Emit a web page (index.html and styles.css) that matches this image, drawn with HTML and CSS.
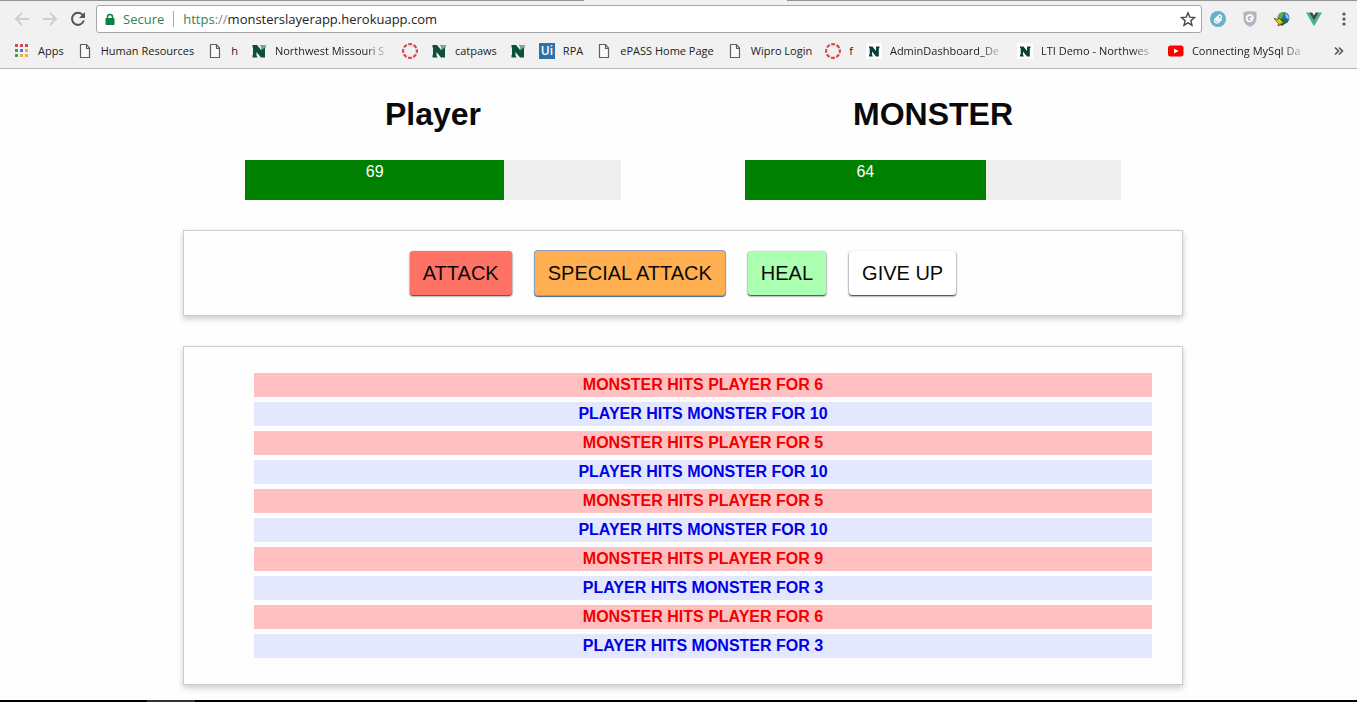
FILE: index.html
```html
<!DOCTYPE html>
<html lang="en">
<head>
<meta charset="utf-8">
<title>Monster Slayer</title>
<link rel="stylesheet" href="styles.css">
</head>
<body>
<svg class="defs" aria-hidden="true">
  <symbol id="page" viewBox="0 0 16 16"><path d="M3.500 1.500h6l3 3.500v9.500h-9zM9.500 1.500v4h3" fill="#fafafa" stroke="#5f5f5f" stroke-width="1.200"/></symbol>
  <symbol id="ring" viewBox="0 0 16 16"><circle cx="8" cy="8" r="6.900" fill="none" stroke="#d84a50" stroke-width="2.200" stroke-dasharray="3.900 1.519" stroke-dashoffset="1.950"/></symbol>
  <symbol id="north" viewBox="0 0 16 16"><path d="M1.500 2h4.500l4.500 5.500V4L9 2h5.500v2l-.5 1v9.500h-4L5.500 9v3.500l1 2h-5v-2l.5-1V5l-.5-1z" fill="#0b5038"/><path d="M9 2h5.500v2L10.500 7V4z" fill="#7fa796"/></symbol>
  <symbol id="small-n" viewBox="0 0 16 16"><path fill="#fff" d="M0 0h16v16H0z"/><path d="M3 3.500h3.500L10 8V3.500h3.500v1.300l-.7.700v8H10L6 8.500v3l.8 2H3v-1.500l.7-.7V5.500L3 4.800z" fill="#0b4038"/></symbol>
</svg>

<header class="browser">
  <div class="tab-edge"><span></span><span></span></div>
  <div class="toolbar">
    <button class="nav" aria-label="Back"><svg viewBox="0 0 16 16"><path d="M15 8H2M8 2L2 8l6 6" fill="none" stroke="#cfcfcf" stroke-width="2"/></svg></button>
    <button class="nav" aria-label="Forward"><svg viewBox="0 0 16 16"><path d="M1 8h13M8 2l6 6-6 6" fill="none" stroke="#cfcfcf" stroke-width="2"/></svg></button>
    <button class="nav" aria-label="Reload"><svg viewBox="0 0 16 16"><path d="M12.800 4.200A6 6 0 1 0 13.800 9.500" fill="none" stroke="#555" stroke-width="2"/><path d="M15 1v6H9z" fill="#555"/></svg></button>
    <div class="address">
      <svg class="lock" viewBox="0 0 10 13"><path d="M2.500 6V4a2.500 2.500 0 0 1 5 0v2" fill="none" stroke="#0b8043" stroke-width="1.500"/><rect x=".5" y="5" width="9" height="7" rx=".8" fill="#0b8043"/></svg>
      <span class="secure">Secure</span>
      <span class="url"><span class="scheme">https</span><span class="slashes">://</span>monsterslayerapp.herokuapp.com</span>
      <button class="star" aria-label="Bookmark this page"><svg viewBox="0 0 16 16"><path d="M8 1.800l1.800 4.300 4.700.4-3.600 3.100 1.100 4.600L8 11.800l-4 2.400 1.100-4.600L1.500 6.500l4.700-.4z" fill="none" stroke="#4a4a4a" stroke-width="1.400"/></svg></button>
    </div>
    <div class="extensions">
      <button aria-label="Clip extension"><svg viewBox="0 0 16 16"><circle cx="8" cy="8" r="8" fill="#65b1ca"/><path d="M11.800 8.200L8.500 11.500q-1.700 1.300-3.200-.2-1.600-1.700 0-3.400L8.800 4.600q1.300-1 2.300 0t0 2.200L8 9.700q-.8.500-1.200 0t0-1.200l2.400-2.200" fill="none" stroke="#fff" stroke-width="1.400"/></svg></button>
      <button aria-label="Shield extension"><svg viewBox="0 0 16 16"><path d="M1.500 1Q8-.5 14.500 1v7q0 5-6.500 8-6.500-3-6.500-8z" fill="#b3b6c2"/><path d="M8 10.500A3.200 3.200 0 1 1 11 6.500Q11 9 8.500 10.800" fill="none" stroke="#fff" stroke-width="1.600"/><path d="M7.500 6.500l3.500.5-2 2.500z" fill="#fff"/></svg></button>
      <button aria-label="Download manager"><svg viewBox="0 0 16 16"><circle cx="9.500" cy="7" r="6" fill="#236fae"/><path d="M4 6q2-5 6-5l-1 4-3 4z" fill="#65b534"/><path d="M11 2q4 2 4 6l-3-1z" fill="#8cc7ee"/><path d="M0 7.500l4 1 1-1.500 5 5-6 3 .5-2.500z" fill="#e5c12d" stroke="#5b4b18" stroke-width=".8"/><path d="M6 8l8 1-3 4-3 2-3-2 4-1z" fill="#286c28"/></svg></button>
      <button aria-label="Vue devtools"><svg viewBox="0 0 16 16"><path d="M0 1.500h3.200L8 9.800l4.800-8.300H16L8 15.300z" fill="#41b883"/><path d="M3.200 1.500h3L8 4.600l1.800-3.100h3L8 9.800z" fill="#35495e"/></svg></button>
      <button class="menu" aria-label="Menu"><svg viewBox="0 0 12 16"><g fill="#555"><circle cx="6" cy="3" r="1.600"/><circle cx="6" cy="8" r="1.600"/><circle cx="6" cy="13" r="1.600"/></g></svg></button>
    </div>
  </div>
  <nav class="bookmarks" aria-label="Bookmarks">
    <a href="#" class="apps"><svg viewBox="0 0 16 16"><g fill="#d34a52"><path d="M1 1h3v3H1zM6 1h3v3H6zM11 1h3v3h-3z"/></g><path d="M1 6h3v3H1zM1 11h3v3H1z" fill="#3fa05a"/><path d="M6 6h3v3H6z" fill="#3b7de0"/><path d="M11 6h3v3h-3zM6 11h3v3H6zM11 11h3v3h-3z" fill="#edae35"/></svg><span>Apps</span></a>
    <a href="#"><svg><use href="#page"/></svg><span>Human Resources</span></a>
    <a href="#"><svg><use href="#page"/></svg><span>h</span></a>
    <a href="#"><svg><use href="#north"/></svg><span class="cut">Northwest Missouri S</span></a>
    <a href="#" aria-label="Canvas"><svg><use href="#ring"/></svg></a>
    <a href="#"><svg><use href="#north"/></svg><span>catpaws</span></a>
    <a href="#" aria-label="Northwest"><svg><use href="#north"/></svg></a>
    <a href="#"><span class="ui">Ui</span><span>RPA</span></a>
    <a href="#"><svg><use href="#page"/></svg><span>ePASS Home Page</span></a>
    <a href="#"><svg><use href="#page"/></svg><span>Wipro Login</span></a>
    <a href="#"><svg><use href="#ring"/></svg><span>f</span></a>
    <a href="#"><svg><use href="#small-n"/></svg><span class="cut">AdminDashboard_De</span></a>
    <a href="#"><svg><use href="#small-n"/></svg><span class="cut">LTI Demo - Northwes</span></a>
    <a href="#"><svg viewBox="0 0 16 16"><rect x="0" y="2.500" width="15.500" height="11" rx="2.500" fill="#f00"/><path d="M6 5.500v5L10.500 8z" fill="#fff"/></svg><span class="cut">Connecting MySql Da</span></a>
    <button class="more" aria-label="More bookmarks"><svg viewBox="0 0 16 16"><path d="M4 4.500L7.500 8 4 11.500M8 4.500L11.500 8 8 11.500" fill="none" stroke="#555" stroke-width="1.600"/></svg></button>
  </nav>
</header>

<main class="game">
  <section class="fighters">
    <div class="fighter"><h1>Player</h1><div class="health"><div class="level" style="width: 69%">69</div></div></div>
    <div class="fighter"><h1>MONSTER</h1><div class="health"><div class="level" style="width: 64%">64</div></div></div>
  </section>
  <section class="panel controls">
    <button class="attack">ATTACK</button>
    <button class="special">SPECIAL ATTACK</button>
    <button class="heal">HEAL</button>
    <button class="give-up">GIVE UP</button>
  </section>
  <section class="panel log">
    <ul>
      <li class="monster">MONSTER HITS PLAYER FOR 6</li>
      <li class="player">PLAYER HITS MONSTER FOR 10</li>
      <li class="monster">MONSTER HITS PLAYER FOR 5</li>
      <li class="player">PLAYER HITS MONSTER FOR 10</li>
      <li class="monster">MONSTER HITS PLAYER FOR 5</li>
      <li class="player">PLAYER HITS MONSTER FOR 10</li>
      <li class="monster">MONSTER HITS PLAYER FOR 9</li>
      <li class="player">PLAYER HITS MONSTER FOR 3</li>
      <li class="monster">MONSTER HITS PLAYER FOR 6</li>
      <li class="player">PLAYER HITS MONSTER FOR 3</li>
    </ul>
  </section>
</main>
<footer class="taskbar"><span></span></footer>
</body>
</html>
```

FILE: styles.css
```css
* { box-sizing: border-box; }

body {
  display: flex;
  flex-direction: column;
  min-height: 100vh;
  margin: 0;
  background: #fefefe;
  color: #0a0a0a;
  font-family: "Liberation Sans", Arial, sans-serif;
}

button {
  padding: 0;
  border: 0;
  background: none;
  color: inherit;
  font: inherit;
}

svg { display: block; flex: none; width: 16px; height: 16px; }
.defs { position: absolute; width: 0; height: 0; }

/* Browser frame */
.browser {
  border-bottom: 1px solid #b4b4b4;
  background: #f1f1f1;
  font-family: "Open Sans", "Noto Sans", sans-serif;
}

.tab-edge { display: flex; justify-content: space-between; height: 5px; }
.tab-edge span { height: 1px; background: #959395; }
.tab-edge span:first-child { width: 43%; }
.tab-edge span:last-child { width: 42%; }

.toolbar { display: flex; align-items: center; padding: 0 7px 0 14px; }
.nav { margin-right: 12px; }
.nav:nth-child(3) { margin-right: 10px; }

.address {
  display: flex;
  flex: 1;
  align-items: center;
  height: 28px;
  padding: 0 5px 0 8px;
  border: 1px solid #a6a6a6;
  border-radius: 3px;
  background: #fff;
  font-size: 13px;
}
.lock { width: 10px; height: 13px; }
.secure {
  margin: 0 9px 0 8px;
  padding-right: 9px;
  border-right: 1px solid #a6a6a6;
  color: #2f8455;
  line-height: 16px;
}
.url { color: #222; }
.scheme { color: #2f8455; }
.slashes { color: #888; }
.star { margin-left: auto; }

.extensions { display: flex; gap: 16px; padding-left: 8px; }
.menu svg { width: 12px; }

.bookmarks {
  display: flex;
  align-items: center;
  gap: 13px;
  height: 35px;
  padding: 0 10px 0 14px;
  color: #222;
  font-size: 11px;
  white-space: nowrap;
}
.bookmarks a {
  display: flex;
  align-items: center;
  gap: 8px;
  color: inherit;
  text-decoration: none;
}
.cut {
  width: 114px;
  mask-image: linear-gradient(to right, #000 80%, transparent);
}
.ui {
  width: 16px;
  background: #2d6fa8;
  color: #fff;
  font-size: 12px;
  font-weight: 600;
  line-height: 16px;
  text-align: center;
}
.more { margin-left: auto; }

/* Game */
.game {
  flex: 1;
  width: 100%;
  max-width: 1009px;
  margin: 0 auto;
  padding: 26px 0 14px 9px;
}

.fighters { display: flex; }
.fighter { flex: 1; padding: 0 15px; text-align: center; }
.fighter h1 { margin: 0 0 27px; font-size: 32px; line-height: 38px; }
.health { width: 80%; height: 40px; margin: 0 auto 30px; background: #eee; }
.level { height: 100%; background: green; color: #fff; line-height: 24px; }

.panel {
  border: 1px solid #ccc;
  background: #fefefe;
  box-shadow: 0 3px 6px #ccc;
}

.controls {
  display: flex;
  flex-wrap: wrap;
  justify-content: center;
  gap: 23px;
  margin-bottom: 30px;
  padding: 20px;
}
.controls button {
  padding: 10px 13px;
  border-radius: 3px;
  background: #fff;
  box-shadow: 0 1px 2px #222;
  font-size: 20px;
  line-height: 24px;
}
.controls .attack { background: #ff7367; }
.controls .special { background: #ffaf4f; box-shadow: 0 0 0 1px #8b9fc5, 0 1px 1px 1px #4b5e8e; }
.controls .heal { background: #aaffb0; }

.log { padding: 26px 30px; }
.log ul {
  display: flex;
  flex-direction: column;
  gap: 5px;
  margin: 0;
  padding-left: 40px;
  list-style: none;
}
.log li { font-weight: bold; line-height: 24px; text-align: center; }
.monster { background: #ffc0c1; color: #f00000; }
.player { background: #e4e8ff; color: #0000e6; }

.taskbar { height: 2px; padding-left: 147px; background: #000; }
.taskbar span { display: block; width: 48px; height: 2px; background: #333; }
```
